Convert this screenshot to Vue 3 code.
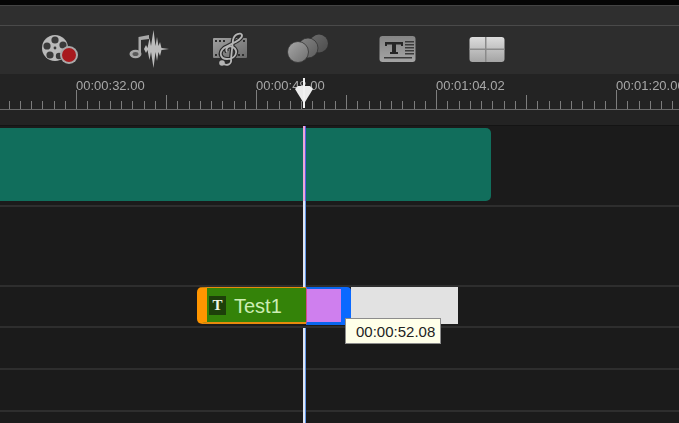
<script setup>
const labels = [
  { x: 76, text: '00:00:32.00' },
  { x: 256, text: '00:00:48.00' },
  { x: 436, text: '00:01:04.02' },
  { x: 616, text: '00:01:20.00' }
];

// ruler ticks, 16 steps between two labels
const ticks = [];
for (let i = -6; i < 54; i++) {
  const step = ((i % 16) + 16) % 16;
  let top = 101;
  if (step === 0) top = 90;
  else if (step === 8) top = 95;
  ticks.push({ x: Math.round(76 + i * 11.25) + 0.5, top });
}
</script>

<template>
  <div class="editor">
    <div class="top-edge"></div>
    <div class="strip"></div>

    <div class="toolbar">
      <svg class="icon" style="margin-left:40px" width="40" height="34" viewBox="0 0 40 34">
        <circle cx="15" cy="15" r="13" fill="#b9b9b9" />
        <g fill="#3a3a3a">
          <circle cx="15" cy="7" r="3.6" /><circle cx="7" cy="13" r="3.6" /><circle cx="23" cy="12" r="3.6" />
          <circle cx="10" cy="22" r="3.6" /><circle cx="19" cy="23" r="3.2" />
        </g>
        <circle cx="15" cy="15" r="1.4" fill="#3a3a3a" />
        <circle cx="29" cy="22" r="9" fill="#a9a9a9" />
        <circle cx="29" cy="22" r="7" fill="#a81a1e" />
      </svg>

      <svg class="icon" style="margin-left:47px" width="42" height="34" viewBox="0 0 42 34">
        <path d="M11.500 20V4L22 2L22 6L14 7V21Z" fill="#a8a8a8" />
        <ellipse cx="8.500" cy="21" rx="6" ry="4.200" fill="#a8a8a8" />
        <ellipse cx="8.500" cy="21" rx="3" ry="2" fill="#5a5a5a" />
        <path d="M17 16L19 12L20.500 15L22.500 5L24 13L26.500 -3L28.500 13L30 4L31.500 13L33 9L34.500 15L42 16L34.500 17L33 23L31.500 19L30 28L28.500 19L26.500 35L24 19L22.500 27L20.500 17L19 20Z" fill="#bcbcbc" />
      </svg>

      <svg class="icon" style="margin-left:43px" width="36" height="36" viewBox="0 0 36 36">
        <defs>
          <linearGradient id="filmGrad" x1="0" y1="0" x2="1" y2="1">
            <stop offset="0" stop-color="#a0a0a0" /><stop offset="1" stop-color="#6a6a6a" />
          </linearGradient>
        </defs>
        <rect x="1" y="6" width="34" height="20" rx="1" fill="url(#filmGrad)" />
        <g fill="#2d2d2d">
          <rect x="3" y="8" width="2" height="2" /><rect x="7" y="8" width="2" height="2" /><rect x="11" y="8" width="2" height="2" />
          <rect x="31" y="8" width="2" height="2" /><rect x="3" y="22" width="2" height="2" /><rect x="7" y="22" width="2" height="2" />
          <rect x="26" y="22" width="2" height="2" /><rect x="30" y="22" width="2" height="2" />
        </g>
        <path d="M10 31C15 35 20 32 19 27L21 8C22 2 29 0 30 3C31 8 18 12 12 16C6 21 9 27 15 27C24 27 27 19 21 15C16 13 13 17 15 20" fill="none" stroke="#2a2a2a" stroke-width="4.200" />
        <path d="M10 31C15 35 20 32 19 27L21 8C22 2 29 0 30 3C31 8 18 12 12 16C6 21 9 27 15 27C24 27 27 19 21 15C16 13 13 17 15 20" fill="none" stroke="#b5b5b5" stroke-width="1.800" />
        <circle cx="10" cy="31" r="2.800" fill="#b5b5b5" />
      </svg>

      <svg class="icon" style="margin-left:38px" width="44" height="28" viewBox="0 0 44 28">
        <defs>
          <linearGradient id="dotA" x1="0" y1="0" x2="1" y2="1">
            <stop offset="0" stop-color="#a8a8a8" /><stop offset="1" stop-color="#6e6e6e" />
          </linearGradient>
          <linearGradient id="dotB" x1="0" y1="0" x2="1" y2="1">
            <stop offset="0" stop-color="#868686" /><stop offset="1" stop-color="#5c5c5c" />
          </linearGradient>
          <linearGradient id="dotC" x1="0" y1="0" x2="1" y2="1">
            <stop offset="0" stop-color="#6c6c6c" /><stop offset="1" stop-color="#4c4c4c" />
          </linearGradient>
        </defs>
        <circle cx="33" cy="7.500" r="9" fill="url(#dotC)" />
        <circle cx="22" cy="12" r="10" fill="url(#dotB)" stroke="#333" stroke-width="0.800" />
        <circle cx="12" cy="16" r="10.500" fill="url(#dotA)" stroke="#333" stroke-width="0.800" />
      </svg>

      <svg class="icon" style="margin-left:49px" width="38" height="28" viewBox="0 0 38 28">
        <defs>
          <linearGradient id="tGrad" x1="0" y1="0" x2="0" y2="1">
            <stop offset="0" stop-color="#858585" /><stop offset="1" stop-color="#a4a4a4" />
          </linearGradient>
          <linearGradient id="gridGrad" x1="0" y1="0" x2="0" y2="1">
            <stop offset="0" stop-color="#dcdcdc" /><stop offset="1" stop-color="#a4a4a4" />
          </linearGradient>
        </defs>
        <rect x="0.500" y="0" width="36" height="26" rx="3" fill="url(#tGrad)" />
        <path d="M6 6H24V10H22V8.500H17V16H19V18H11V16H13V8.500H8V10H6Z" fill="#262626" />
        <g fill="#3a3a3a">
          <rect x="26" y="5" width="9" height="1.500" /><rect x="26" y="8" width="9" height="1.500" /><rect x="26" y="11" width="9" height="1.500" />
          <rect x="26" y="14" width="9" height="1.500" /><rect x="26" y="17" width="9" height="1.500" /><rect x="5" y="21" width="28" height="1.500" />
        </g>
      </svg>

      <svg class="icon" style="margin-left:52px" width="37" height="27" viewBox="0 0 37 27">
        <rect x="0.500" y="0" width="35" height="25" rx="3" fill="url(#gridGrad)" />
        <rect x="16" y="0" width="1.500" height="25" fill="#8a8a8a" />
        <rect x="0.500" y="11.500" width="35" height="1.500" fill="#8a8a8a" />
      </svg>
    </div>

    <div class="ruler">
      <svg class="ticks" width="679" height="37" viewBox="0 74 679 37">
        <line v-for="t in ticks" :key="t.x" :x1="t.x" :x2="t.x" :y1="t.top" y2="109" stroke="#7d7d7d" />
        <line x1="0" x2="679" y1="109.500" y2="109.500" stroke="#6a6a6a" />
      </svg>
      <span v-for="l in labels" :key="l.x" class="label" :style="{ left: l.x + 'px' }">{{ l.text }}</span>
      <svg class="head" width="24" height="34" viewBox="0 0 24 34">
        <path d="M3 15L6 12H18L21 15L13 28H11Z" fill="#ececec" />
        <rect x="11" y="4" width="2" height="31" fill="#f2f2f2" />
      </svg>
    </div>
    <div class="ruler-gap"></div>

    <div class="tracks">
      <div class="track track-tall">
        <div class="video-clip"></div>
      </div>
      <div class="track track-empty"></div>
      <div class="track track-title">
        <div class="title-clip">
          <span class="t-badge">T</span>
          <span class="title-name">Test1</span>
        </div>
        <div class="selection"></div>
        <div class="selection-handle"></div>
        <div class="ghost"></div>
      </div>
      <div class="track"></div>
      <div class="track"></div>
      <div class="track"></div>

      <div class="playhead">
        <div class="playhead-top"></div>
        <div class="playhead-rest"></div>
      </div>
      <div class="tooltip">00:00:52.08</div>
    </div>
  </div>
</template>

<style scoped>
.editor {
  width: 679px;
  height: 423px;
  overflow: hidden;
  background: #1b1b1b;
  font-family: "Liberation Sans", Arial, sans-serif;
}

.top-edge {
  height: 5px;
  background: #050505;
}

.strip {
  height: 19px;
  background: #2f2f2f;
  border-top: 1px solid #444;
  border-bottom: 1px solid #4a4a4a;
}

.toolbar {
  height: 48px;
  display: flex;
  align-items: center;
  background: #2d2d2d;
}

.icon {
  flex: none;
  overflow: visible;
  filter: blur(0.5px);
}

.ruler {
  position: relative;
  height: 37px;
  background: #232323;
}

.ticks {
  position: absolute;
  left: 0;
  top: 0;
}

.label {
  position: absolute;
  top: 4px;
  font-size: 13px;
  line-height: 16px;
  color: #a8a8a8;
  white-space: nowrap;
  filter: blur(0.3px);
}

.head {
  position: absolute;
  left: 292px;
  top: 0;
  filter: blur(0.4px);
}

.ruler-gap {
  height: 14px;
  background: #232323;
  border-bottom: 1px solid #141414;
}

.tracks {
  position: relative;
}

.track {
  display: flex;
  align-items: flex-start;
  height: 40px;
  background: #1b1b1b;
  border-bottom: 2px solid #2e2e2e;
}

.track-tall {
  height: 79px;
}

.track-empty {
  height: 78px;
}

.track-title {
  position: relative;
  z-index: 1;
  height: 39px;
}

.video-clip {
  width: 491px;
  height: 73px;
  margin-top: 2px;
  background: #116e5c;
  border-radius: 0 5px 5px 0;
}

.title-clip {
  display: flex;
  align-items: center;
  width: 99px;
  height: 34px;
  margin-left: 197px;
  background: #348309;
  border: solid #e88a0c;
  border-width: 1px 0 2px;
  border-left: 10px solid #ff9500;
  border-radius: 5px 0 0 5px;
}

.t-badge {
  width: 17px;
  height: 19px;
  margin-left: 2px;
  background: #1d3f0a;
  color: #eef5e4;
  font-family: "Liberation Serif", serif;
  font-size: 15px;
  font-weight: 700;
  line-height: 18px;
  text-align: center;
}

.title-name {
  margin: 1px 0 0 8px;
  font-size: 20px;
  line-height: 24px;
  color: #cdeeb4;
}

.selection {
  width: 34px;
  height: 33px;
  background: #cf7fee;
  border: solid #0a66ee;
  border-width: 2px 0 3px;
  border-left: 1px solid #d0508c;
}

.selection-handle {
  width: 10px;
  height: 38px;
  background: #0a69ff;
  border-radius: 0 4px 4px 0;
}

.ghost {
  width: 107px;
  height: 37px;
  background: #e2e2e2;
}

.playhead {
  position: absolute;
  left: 303px;
  top: 0;
  width: 3px;
  height: 297px;
}

.playhead-top {
  height: 75px;
  background: linear-gradient(to right, #eda8d4 0 2px, #5a5ae6 2px);
}

.playhead-rest {
  height: 222px;
  background: linear-gradient(to right, #dfe6f2 0 2px, #5f95e8 2px);
}

.tooltip {
  position: absolute;
  z-index: 2;
  left: 345px;
  top: 192px;
  width: 84px;
  height: 24px;
  padding-left: 10px;
  border: 1px solid #8c8c8c;
  background: #ffffe9;
  color: #222;
  font-size: 15px;
  line-height: 25px;
  white-space: nowrap;
}
</style>

<style>
html,
body {
  background: #1b1b1b;
}
</style>
